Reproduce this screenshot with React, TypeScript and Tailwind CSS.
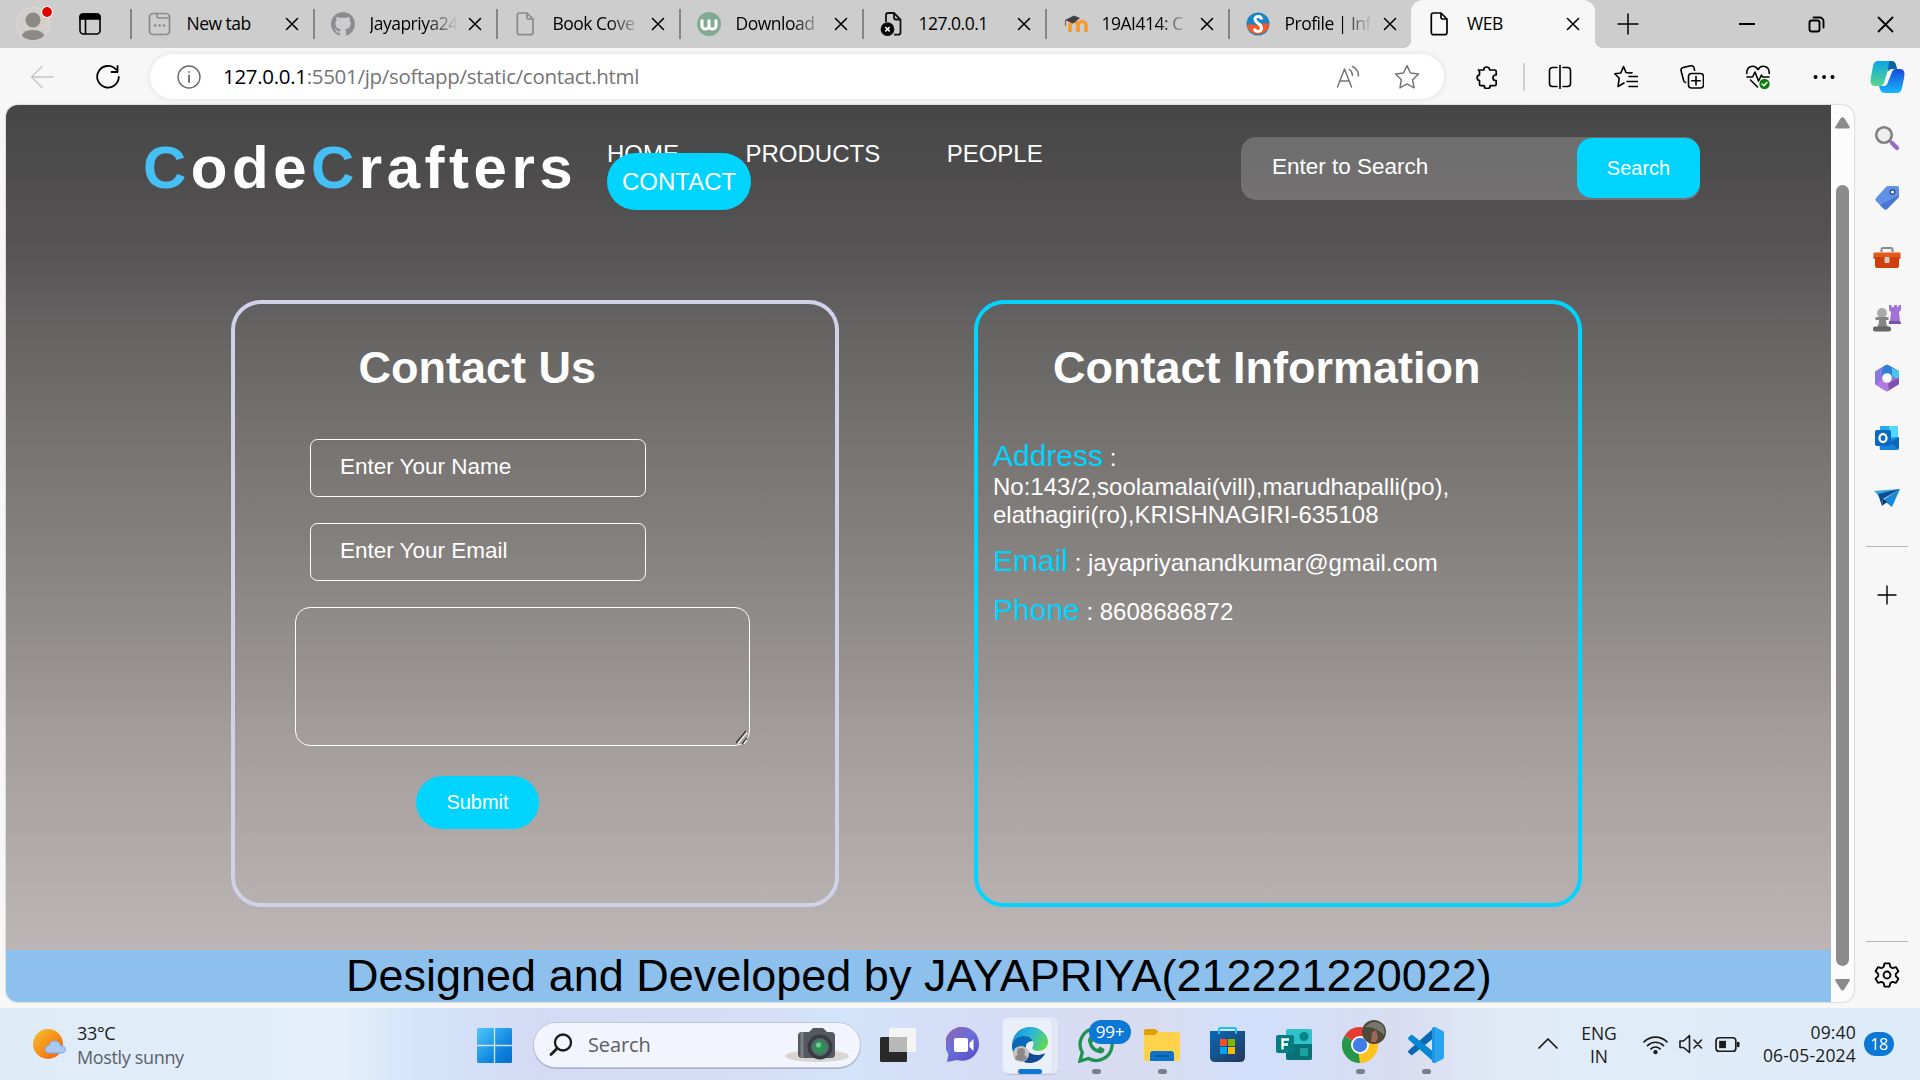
import React from 'react';
import type { ReactNode } from 'react';

const stroke = { fill: 'none', stroke: 'currentColor', strokeLinecap: 'round' as const, strokeLinejoin: 'round' as const };

function Svg({ size = 24, box = 24, w = 1.5, className = '', children }: { size?: number; box?: number; w?: number; className?: string; children: ReactNode }) {
  return (
    <svg width={size} height={size} viewBox={`0 0 ${box} ${box}`} {...stroke} strokeWidth={w} className={`block shrink-0 ${className}`}>
      {children}
    </svg>
  );
}

const Close = () => (
  <Svg size={14} box={14} w={1.6}><path d="M1.5 1.5l11 11M12.5 1.5l-11 11" /></Svg>
);
const PageIcon = ({ color }: { color: string }) => (
  <Svg className={color} w={1.7}><path d="M5.5 1h7.5l6 6v13.5a2.2 2.2 0 0 1-2.2 2.2H5.5a2.2 2.2 0 0 1-2.2-2.2V3.2A2.2 2.2 0 0 1 5.500 1zM13 1v4.500A1.500 1.500 0 0 0 14.500 7H19" /></Svg>
);
const NewTabIcon = () => (
  <Svg className="text-[#8a8a8a]" w={1.7}><rect x="1.500" y="1.500" width="20" height="21" rx="3.500" /><path d="M9 1.500v2.800A1.700 1.700 0 0 0 10.700 6H21.500" /><path d="M7.200 13.500h.1M11.600 13.500h.1M16 13.500h.1" strokeWidth={2.6} /></Svg>
);
const GithubIcon = () => (
  <svg width="24" height="24" viewBox="0 0 16 16" fill="#8b8d91" className="block"><path d="M8 0C3.58 0 0 3.58 0 8c0 3.54 2.29 6.53 5.47 7.59.4.07.55-.17.55-.38 0-.19-.01-.82-.01-1.49-2.01.37-2.53-.49-2.69-.94-.09-.23-.48-.94-.82-1.13-.28-.15-.68-.52-.01-.53.63-.01 1.08.58 1.23.82.72 1.21 1.87.87 2.33.66.07-.52.28-.87.51-1.07-1.78-.2-3.64-.89-3.64-3.95 0-.87.31-1.59.82-2.15-.08-.2-.36-1.02.08-2.12 0 0 .67-.21 2.2.82.64-.18 1.32-.27 2-.27s1.36.09 2 .27c1.53-1.04 2.2-.82 2.2-.82.44 1.1.16 1.92.08 2.12.51.56.82 1.27.82 2.15 0 3.07-1.87 3.75-3.65 3.95.29.25.54.73.54 1.48 0 1.07-.01 1.93-.01 2.2 0 .21.15.46.55.38A8.01 8.01 0 0 0 16 8c0-4.42-3.58-8-8-8z" /></svg>
);
const WIcon = () => (
  <svg width="24" height="24" viewBox="0 0 24 24" className="block"><circle cx="12" cy="12" r="12" fill="#82aa92" /><path d="M5 7.500v6.500a3.500 3 0 0 0 7 0V7.500v6.500a3.500 3 0 0 0 7 0V7.500" fill="none" stroke="#fff" strokeWidth="3" /></svg>
);
const ErrorPageIcon = () => (
  <svg width="24" height="24" viewBox="0 0 24 24" className="block" fill="none" stroke="#111" strokeWidth="1.8"><path d="M6 10V3.200A2.200 2.200 0 0 1 8.200 1H14l6.500 6.500v13a2.200 2.200 0 0 1-2.200 2.200H14M14 1v4.500a2 2 0 0 0 2 2h4.500" /><circle cx="7.500" cy="17.200" r="6" fill="#000" /><path d="M5.300 15l4.400 4.400M9.700 15l-4.400 4.400" stroke="#fff" strokeWidth="1.500" /></svg>
);
const MoodleIcon = () => (
  <svg width="26" height="24" viewBox="0 0 26 24" className="block" fill="none"><path d="M7 20v-6.500a3.700 3.700 0 0 1 8 0V20M15 20v-6.500a3.900 3.900 0 0 1 8 0V20" stroke="#f7982d" strokeWidth="3.500" /><path d="M2 8l9-4.500 6 2.500-7 5.500z" fill="#3f4245" /><path d="M2.500 8v6" stroke="#8a6a45" strokeWidth="1.200" /></svg>
);
const SIcon = () => (
  <svg width="24" height="24" viewBox="0 0 24 24" className="block"><circle cx="12" cy="12" r="11.500" fill="#1a86c8" /><path d="M.7 13.500c5-3 8 1 12-1s6-1 10.700-1A11.500 11.500 0 0 1 .7 13.500z" fill="#f15a29" /><path d="M15.500 7.500c0-4-6.500-4-6.500-.5 0 4.500 6.500 4.500 6.500 9 0 4.500-7 4.500-7 .5" fill="none" stroke="#fff" strokeWidth="3" /></svg>
);

const tabs: { title: string; icon: ReactNode; fade: boolean }[] = [
  { title: 'New tab', icon: <NewTabIcon />, fade: false },
  { title: 'Jayapriya24', icon: <GithubIcon />, fade: true },
  { title: 'Book Cove', icon: <PageIcon color="text-[#8a8a8a]" />, fade: true },
  { title: 'Download', icon: <WIcon />, fade: true },
  { title: '127.0.0.1', icon: <ErrorPageIcon />, fade: false },
  { title: '19AI414: C', icon: <MoodleIcon />, fade: true },
  { title: 'Profile | Inf', icon: <SIcon />, fade: true },
];

function TabTitle({ title, fade }: { title: string; fade: boolean }) {
  return (
    <div className={`mb-[2px] ml-[15px] h-7 w-[86px] overflow-hidden text-[17.500px] leading-7 tracking-[-0.5px] whitespace-nowrap text-black ${fade ? '[mask-image:linear-gradient(to_right,#000_65%,transparent_102%)]' : ''}`}>
      {title}
    </div>
  );
}

function TabStrip() {
  return (
    <div className="flex h-12 bg-[#cdcdcd]">
      <div className="flex w-[130px] items-center">
        <svg width="44" height="48" viewBox="0 0 44 48" className="ml-3"><circle cx="21" cy="24" r="16.500" fill="#d3d0cc" stroke="#dedcd7" /><circle cx="21" cy="20" r="7.500" fill="#8d8985" /><path d="M9.500 35.500a12.500 9 0 0 1 23 0A16.500 16.500 0 0 1 9.500 35.500z" fill="#8d8985" /><circle cx="35" cy="12" r="5.500" fill="#e60000" stroke="#fff" strokeWidth="1.200" /></svg>
        <svg width="22" height="22" viewBox="0 0 22 22" className="ml-[23px]" fill="none" stroke="#000" strokeWidth="1.600"><rect x="1" y="1" width="20" height="20" rx="3.500" /><path d="M1 6V3.500A2.500 2.500 0 0 1 3.500 1h15A2.500 2.500 0 0 1 21 3.500V6z" fill="#000" /><path d="M6.500 6v15" /></svg>
      </div>
      {tabs.map((t) => (
        <div key={t.title} className="flex w-[183px] items-center">
          <div className="h-[30px] w-[1.500px] bg-[#858585]" />
          <div className="ml-4 w-6">{t.icon}</div>
          <TabTitle title={t.title} fade={t.fade} />
          <div className="ml-[12px]"><Close /></div>
        </div>
      ))}
      <div className="relative flex w-[184px] items-center rounded-t-[12px] bg-[#f7f7f7]">
        <div className="absolute -left-2 bottom-0 size-2 bg-[radial-gradient(circle_at_0_0,transparent_8px,#f7f7f7_8px)]" />
        <div className="absolute -right-2 bottom-0 size-2 bg-[radial-gradient(circle_at_100%_0,transparent_8px,#f7f7f7_8px)]" />
        <div className="ml-[17px] w-6"><PageIcon color="text-black" /></div>
        <TabTitle title="WEB" fade={false} />
        <div className="ml-[13px]"><Close /></div>
      </div>
      <div className="ml-[22px] flex w-[109px] items-center"><Svg size={22} box={22} w={1.500}><path d="M11 1v20M1 11h20" /></Svg></div>
      <div className="flex flex-1 items-center">
        <div className="flex w-[69px] items-center pl-[13px]"><div className="h-[1.500px] w-[16px] bg-black" /></div>
        <div className="flex w-[69px] items-center pl-[13px]"><Svg size={17} box={17} w={1.900}><rect x="1.500" y="4.500" width="10" height="11" rx="2" /><path d="M5.500 1.500h6a4 4 0 0 1 4 4v6" /></Svg></div>
        <Svg size={17} box={17} w={1.800} className="ml-[13px]"><path d="M1.500 1.500l14 14M15.500 1.500l-14 14" /></Svg>
      </div>
    </div>
  );
}

function ToolButton({ children }: { children: ReactNode }) {
  return <div className="flex w-[66px] shrink-0 items-center justify-center">{children}</div>;
}

function Toolbar() {
  return (
    <div className="flex h-[57px] items-center bg-[#f7f7f7] text-black">
      <div className="flex w-[150px] items-center">
        <Svg className="ml-[30px] text-[#c6c6c6]" w={1.400}><path d="M23 12H1.500M12 1.500L1.500 12 12 22.500" /></Svg>
        <Svg className="ml-[42px]" w={1.800}><path d="M20 4.500A10.800 10.800 0 1 0 22.800 12M21.500 1v6h-6" /></Svg>
      </div>
      <div className="flex h-[45px] w-[1294px] items-center rounded-full bg-white shadow-[0_0_6px_rgba(0,0,0,0.1)]">
        <Svg className="ml-[27px] text-[#6b6b6b]" w={1.400}><circle cx="12" cy="12" r="11" /><path d="M12 10.500V17M12 7v.1" strokeWidth={1.800} /></Svg>
        <div className="mb-[2px] ml-[22px] w-[1113px] text-[20.500px] leading-8 tracking-[-0.31px] whitespace-nowrap text-[#757575]"><span className="text-black">127.0.0.1</span>:5501/jp/softapp/static/contact.html</div>
        <Svg className="text-[#767676]" w={1.500}><path d="M1.500 22L8.500 4l7 18M4 16h9M13.500 4.500c2 1.500 3 3.500 3 6M16.500 1.500c4 2 6 5 6 9.500" /></Svg>
        <Svg size={26} className="ml-[34px] text-[#767676]" w={1.400}><path d="M12 1.500l3.200 6.800 7.400 1-5.400 5.200 1.300 7.500L12 18.400 5.500 22l1.300-7.500L1.400 9.300l7.400-1z" /></Svg>
      </div>
      <div className="flex w-[79px] items-center pl-[31px]">
        <Svg size={24} w={1.700}><path d="M3.500 5h5.200a3 3 0 1 1 6 0h5a1.500 1.500 0 0 1 1.500 1.500V10h-1a2.800 2.800 0 0 0 0 5.500h1v3.700a1.500 1.500 0 0 1-1.500 1.500h-4.500a3 3 0 0 1-6 0H6a1.500 1.500 0 0 1-1.500-1.500v-3.700a2.900 2.900 0 0 1 0-5.700V6.500z" /></Svg>
      </div>
      <div className="h-7 w-[1.500px] bg-[#cfcfcf]" />
      <div className="ml-[2px] flex">
        <ToolButton><Svg w={1.600}><path d="M12 0v24M9 2.500H4.500A3 3 0 0 0 1.500 5.500v13a3 3 0 0 0 3 3H9M15 2.500h4.500a3 3 0 0 1 3 3v13a3 3 0 0 1-3 3H15" /></Svg></ToolButton>
        <ToolButton><Svg w={1.600}><path d="M16 8l-4-.5L9.500 1.500 6.800 8 .8 8.800l4.400 4.500L4 21.500l6-3.500M15 11.500h8.500M13 16.500h10.500M15 21.500h8.500M15 8l3-.3" /></Svg></ToolButton>
        <ToolButton><Svg w={1.600}><rect x="8.500" y="8.500" width="15" height="14.500" rx="3" /><path d="M16 11.500v8.500M11.700 15.700h8.600M5.500 17.500A3 3 0 0 1 3.500 15L1 5.500A2.800 2.800 0 0 1 3 2.500l8-1.800a2.500 2.500 0 0 1 3 2l.6 2.500" /></Svg></ToolButton>
        <ToolButton><Svg w={1.600}><path d="M.8 8.500C.5 0 9-.5 12 4.500 15-.5 23.500 0 23.200 8.500M1 12h5.500l2.500-5 3.500 9 3-6 1 2H23M4.500 15l7 7" /><circle cx="18.500" cy="19" r="5.200" fill="#107c10" stroke="none" /><path d="M16.200 19l1.700 1.700 3-3.200" stroke="#fff" /></Svg></ToolButton>
        <ToolButton><Svg w={3.800}><path d="M3.500 12h.1M12 12h.1M20.500 12h.1" /></Svg></ToolButton>
      </div>
      <svg width="38" height="34" viewBox="0 0 38 34" className="ml-[12px] shrink-0">
        <defs>
          <linearGradient id="cpa" x1="0" y1="0" x2="0" y2="1"><stop offset="0" stopColor="#0aa5e8" /><stop offset="1" stopColor="#58d68d" /></linearGradient>
          <linearGradient id="cpb" x1="0" y1="0" x2="0" y2="1"><stop offset="0" stopColor="#1848d8" /><stop offset="1" stopColor="#18b8ff" /></linearGradient>
        </defs>
        <path d="M9 1h13q4 0 5 4l1 4h-6q-3 0-4 4l-3 10q-1 3-4 3H6q-6 0-4-9L4 6q1-5 5-5z" fill="url(#cpa)" />
        <path d="M20 1h2q4 0 5 4l1 4h-6l-3 2z" fill="#0d63a8" />
        <path d="M28 33H16q-4 0-5-4l-1-3h5q3 0 4-4l4-10q1-3 4-3h4q6 0 4 9l-2 10q-1 5-5 5z" fill="url(#cpb)" />
      </svg>
    </div>
  );
}

const navLinks = ['HOME', 'PRODUCTS', 'PEOPLE'];

function SiteHeader() {
  return (
    <header className="flex h-[195px] items-start">
      <div className="mt-[28px] ml-[137px] w-[464px] text-[60px] leading-[70px] font-bold tracking-[4.500px] whitespace-nowrap text-white">
        <span className="text-[#46bff5]">C</span>ode<span className="text-[#46bff5]">C</span>rafters
      </div>
      <nav className="mt-[35px] w-[634px] text-[24px] leading-7 text-white">
        <div className="flex gap-[66.500px]">{navLinks.map((l) => <span key={l}>{l}</span>)}</div>
        <div><span className="relative rounded-[30px] bg-[#00d4ff] p-[15px]">CONTACT</span></div>
      </nav>
      <div className="mt-[32px] flex h-[63px] w-[459px] items-start justify-between rounded-[15px] bg-white/20">
        <div className="mt-[14px] ml-[31px] text-[22.500px] leading-8 text-white">Enter to Search</div>
        <div className="mt-px flex h-[60px] w-[123px] items-center justify-center rounded-[15px] bg-[#00d4ff] text-[20px] text-white">Search</div>
      </div>
    </header>
  );
}

function ContactForm() {
  return (
    <section className="h-[607px] w-[608px] rounded-[30px] border-4 border-[#d0d2e9] text-[22.500px] text-white">
      <h2 className="mt-[37px] ml-[123.500px] text-[45px] leading-[54px] font-bold">Contact Us</h2>
      <div className="mt-[44px] ml-[75px] flex h-[58px] w-[336px] items-center rounded-[7.500px] border border-white pb-[2px] pl-[29px]">Enter Your Name</div>
      <div className="mt-[26px] ml-[75px] flex h-[58px] w-[336px] items-center rounded-[7.500px] border border-white pb-[2px] pl-[29px]">Enter Your Email</div>
      <div className="mt-[26px] ml-[60px] flex h-[139px] w-[455px] items-end justify-end rounded-[15px] border border-white">
        <svg width="15" height="15" viewBox="0 0 15 15" fill="none" strokeWidth="1.300"><path d="M2 13L12 1M8 14l5-6" stroke="#333" /><path d="M4 13.500L13 2.500M10 14l3-4" stroke="#eee" /></svg>
      </div>
      <div className="mt-[30px] ml-[181px] flex h-[53px] w-[123px] items-center justify-center rounded-full bg-[#00d4ff] pb-px text-[20px]">Submit</div>
    </section>
  );
}

function Label({ children }: { children: ReactNode }) {
  return <span className="text-[30px] text-[#00d4ff]">{children}</span>;
}

function ContactInfo() {
  return (
    <section className="h-[607px] w-[608px] rounded-[30px] border-4 border-[#00d4ff] pl-[15px] text-[24px] text-white">
      <h2 className="mt-[37px] ml-[60px] text-[45px] leading-[54px] font-bold">Contact Information</h2>
      <div className="mt-[44px] h-[34px] leading-[34px]"><Label>Address</Label> :</div>
      <div className="leading-7">No:143/2,soolamalai(vill),marudhapalli(po),<br />elathagiri(ro),KRISHNAGIRI-635108</div>
      <div className="mt-[15px] h-[34px] leading-[34px]"><Label>Email</Label> : jayapriyanandkumar@gmail.com</div>
      <div className="mt-[15px] h-[34px] leading-[34px]"><Label>Phone</Label> : 8608686872</div>
    </section>
  );
}

function WebPage() {
  return (
    <div className="flex h-[897px] w-[1848px] overflow-hidden rounded-[12px] bg-[#fcfcfc] shadow-[0_0_2px_rgba(0,0,0,0.35)]">
      <div className="flex w-[1825px] flex-col font-['Liberation_Sans',Arial,sans-serif]">
        <div className="h-[845px] bg-[linear-gradient(#464646_0%,#555253_16%,#625f61_24%,#656361_26%,#6f6e6b_35%,#767270_39%,#827e7c_50%,#918d8a_62%,#9a9592_69%,#a19b99_73%,#bdb6b6_100%)]">
          <SiteHeader />
          <div className="flex gap-[135px] pl-[225px]">
            <ContactForm />
            <ContactInfo />
          </div>
        </div>
        <footer className="h-[52px] bg-[#8dc0ec] pl-[340px] text-[45px] leading-[52px] whitespace-nowrap text-black">Designed and Developed by JAYAPRIYA(212221220022)</footer>
      </div>
      <div className="flex flex-1 flex-col items-center pt-[12px] pr-px">
        <svg width="15" height="12" viewBox="0 0 15 12" fill="#8b8b8b"><path d="M7.500 0q1 0 2 1.500l5 8q1 2-1 2H1.500q-2 0-1-2l5-8q1-1.500 2-1.500z" /></svg>
        <div className="mt-[56px] h-[781px] w-[13px] rounded-full bg-[#8b8b8b]" />
        <svg width="15" height="12" viewBox="0 0 15 12" fill="#8b8b8b" className="mt-[13px]"><path d="M7.500 11.500q-1 0-2-1.500l-5-8q-1-2 1-2h12q2 0 1 2l-5 8q-1 1.500-2 1.500z" /></svg>
      </div>
    </div>
  );
}

const sideIcons: ReactNode[] = [
  <svg key="s" width="26" height="26" viewBox="0 0 26 26" fill="none"><circle cx="10" cy="10" r="7.800" stroke="#808080" strokeWidth="2.600" fill="#eee" /><path d="M15.500 15.500l2 2" stroke="#777" strokeWidth="2.500" /><path d="M18 18l5 5" stroke="#9868ce" strokeWidth="4.200" strokeLinecap="round" /></svg>,
  <svg key="t" width="26" height="26" viewBox="0 0 26 26"><path d="M14 1h9q2 0 2 2v8q0 1-1 2L13 24q-1.500 1-3 0l-8-8q-1.500-1.500 0-3L12 2q1-1 2-1z" fill="#5f91e4" /><path d="M25 10v1q0 1-1 2L13 24q-1.500 1-3 0l-4-4z" fill="#4a76d2" /><circle cx="18.500" cy="7" r="2.300" fill="#fff" stroke="#2f4f96" strokeWidth="1.500" /></svg>,
  <svg key="b" width="28" height="24" viewBox="0 0 28 24"><path d="M8.500 6V3.500Q8.500 2 10 2h8q1.500 0 1.500 1.500V6" fill="none" stroke="#8a8a8a" strokeWidth="2" /><path d="M2 11h24v9q0 2-2 2H4q-2 0-2-2z" fill="#d13e0d" /><rect x=".5" y="6.500" width="27" height="6" rx="1" fill="#e4581b" /><path d="M.5 12h27" stroke="#aa3208" /><rect x="11.500" y="11" width="5" height="6" rx="1" fill="#ccc" /></svg>,
  <svg key="c" width="28" height="28" viewBox="0 0 28 28"><path d="M16 1h2.500v2H21V1h3v2h1.500V1H28v5l-2 2 1 9 1 3H16l1-3 1-9-2-2z" fill="#a272d6" /><path d="M16 17h11l1 3H16z" fill="#7950ab" /><circle cx="9" cy="9" r="5" fill="#aaa" /><path d="M2.500 13h13v3H13q0 5 2 7H4q2-2 2-7H2.500z" fill="#858585" /><rect y="22.500" width="18" height="5" rx="2" fill="#666" /></svg>,
  <svg key="m" width="26" height="28" viewBox="0 0 26 28"><path d="M12 1Q13 .5 14 1L24 6.500q1 .5 1 2v10q0 1.500-1 2L14 27q-1 .5-2 0L2 21q-1-.5-1-2V9q0-1.500 1-2z" fill="#7b74dc" /><path d="M10 2l2-1q1-.5 2 0l10 5.500q1 .5 1 2V16l-7-4-5-3-5 3-.5 8L2 18z" fill="#2f80d8" /><path d="M10 2L2 7q-1 .5-1 2v10q0 1 1 1.700L8 17V8q0-4 2-6z" fill="#8b78dd" /><path d="M18 4l6 2.500q1 .5 1 2V16l-7-4z" fill="#49c6f0" /><path d="M2 20.500l6-4.500 5 3 5-3 7-2v5q0 1-1 1.700L14 27q-1 .5-2 0z" fill="#b37ae0" /><path d="M25 14v5q0 1-1 1.700L15 26l-1-6 4-3z" fill="#8050ac" /><circle cx="13" cy="14" r="4.800" fill="#f7f7f7" /></svg>,
  <svg key="o" width="26" height="26" viewBox="0 0 26 26"><rect x="6" y="1" width="18" height="20" rx="1" fill="#28a8ea" /><path d="M15 1h8q1 0 1 1v10h-9z" fill="#50d9ff" /><path d="M5 14h12l8-2v11q0 2-2 2H6z" fill="#1683d8" /><path d="M25 12v12l-9-6z" fill="#1066b5" /><rect x="1" y="5" width="16" height="16" rx="2" fill="#0a69c3" /><ellipse cx="9" cy="13" rx="3.500" ry="4" fill="none" stroke="#fff" strokeWidth="2.300" /></svg>,
  <svg key="p" width="26" height="20" viewBox="0 0 26 20"><path d="M0 3L26 1 8 11z" fill="#2da7e8" /><path d="M26 1L18 19 9 12z" fill="#1689d8" /><path d="M4 6L26 1 9 11l-1 7z" fill="#0e4b91" /><path d="M8 18l5-4-4-3z" fill="#102f61" /></svg>,
];

function Sidebar() {
  return (
    <aside className="flex h-[903px] w-[65px] flex-col items-center">
      <div className="mt-[3px] flex flex-col">
        {sideIcons.map((icon, i) => <div key={i} className="flex h-[60px] items-center justify-center">{icon}</div>)}
      </div>
      <div className="mt-[18px] h-px w-[42px] bg-[#b5b5b5]" />
      <Svg size={20} box={20} w={1.400} className="mt-[38px]"><path d="M10 1v18M1 10h18" /></Svg>
      <div className="mt-[336px] h-px w-[42px] bg-[#b5b5b5]" />
      <Svg size={26} w={1.700} className="mt-[20px]"><circle cx="12" cy="12" r="3.200" /><path d="M9.700 1.300h4.600l.8 3.200 2 1.200 3.200-1 2.200 3.900-2.400 2.300v2.200l2.400 2.300-2.200 3.900-3.200-1-2 1.200-.8 3.200H9.700l-.8-3.200-2-1.200-3.200 1-2.200-3.900 2.400-2.300v-2.200L1.500 8.600l2.200-3.900 3.200 1 2-1.200z" /></Svg>
    </aside>
  );
}

function EdgeIcon() {
  return (
    <svg width="36" height="36" viewBox="0 0 36 36">
      <defs><linearGradient id="eg" x1="0" y1=".3" x2="1" y2=".7"><stop stopColor="#1794d9" /><stop offset=".45" stopColor="#2bb7da" /><stop offset="1" stopColor="#65da45" /></linearGradient></defs>
      <path d="M0 19c0-7 6-11 12-11 5 0 9 3 9 6-5 0-8 3-7 8 2 8 10 11 19 5-9 15-33 10-33-8z" fill="#0c69b8" />
      <path d="M13 18c0 8 11 13 20 8-5 10-17 12-21 8-4-4-3-12 1-16z" fill="#114a92" />
      <path d="M0 17C1 6 9 0 18 0c11 0 18 8 18 15 0 6-5 9-10 9-5 0-7-2-5-5 2-5-3-10-9-10C6 9 1 13 0 17z" fill="url(#eg)" />
      <circle cx="9" cy="27" r="8" fill="#c7c5c2" /><circle cx="9" cy="25" r="4" fill="#8b8987" /><path d="M3 32a6 5 0 0 1 12 0q-6 4-12 0z" fill="#8b8987" />
    </svg>
  );
}

const taskIcons: { key: string; icon: ReactNode; dot: boolean }[] = [
  { key: 'explorer', dot: true, icon: <svg width="36" height="36" viewBox="0 0 36 36"><path d="M0 4q0-2 2-2h9l4 3v6H0z" fill="#dfa000" /><path d="M14 5h20q2 0 2 2v25q0 2-2 2H2q-2 0-2-2V8h11z" fill="#ffd24c" /><path d="M6 34v-7q0-3 3-3h18q3 0 3 3v7z" fill="#0d72c8" /><path d="M11 29h14" stroke="#0a4f91" strokeWidth="1.500" /></svg> },
  { key: 'store', dot: false, icon: <svg width="36" height="36" viewBox="0 0 36 36"><defs><linearGradient id="sg" x1="0" y1="0" x2="1" y2="1"><stop stopColor="#0869b7" /><stop offset="1" stopColor="#253858" /></linearGradient></defs><path d="M0 4h35v26q0 5-5 5H5q-5 0-5-5z" fill="url(#sg)" /><path d="M9 7V2q0-1 1-1h15q1 0 1 1v5" fill="none" stroke="#20c4f4" strokeWidth="2" /><path d="M10 12h7v7h-7z" fill="#f25022" /><path d="M18 12h7v7h-7z" fill="#7fba00" /><path d="M10 20h7v7h-7z" fill="#00a4ef" /><path d="M18 20h7v7h-7z" fill="#ffb900" /></svg> },
  { key: 'forms', dot: false, icon: <svg width="36" height="36" viewBox="0 0 36 36"><rect x="10" y="2" width="26" height="31" rx="2" fill="#30c2c9" /><path d="M10 17h26v14q0 2-2 2H12q-2 0-2-2z" fill="#087276" /><circle cx="28" cy="9.500" r="4.500" fill="#06858b" /><rect x="24" y="21" width="8" height="8" fill="#1ba0a4" /><rect y="8" width="18" height="18" rx="2" fill="#047e82" /><path d="M6.500 22.500V12.500H13M6.500 17.500h5.500" fill="none" stroke="#fff" strokeWidth="2.300" /></svg> },
  { key: 'chrome', dot: true, icon: <svg width="44" height="44" viewBox="0 0 44 44" className="-mt-2 -mr-2 shrink-0"><path d="M18 26L2.400 17A18 18 0 0 1 33.600 17z" fill="#e63b32" /><path d="M18 26l15.600-9A18 18 0 0 1 18 44z" fill="#fcc31e" /><path d="M18 26v18A18 18 0 0 1 2.400 17z" fill="#26964a" /><path d="M18 17h15.600L26 31l-8 13 -2-13z" fill="#fcc31e" /><circle cx="18" cy="26" r="9" fill="#fff" /><circle cx="18" cy="26" r="7.200" fill="#3f7ee8" /><circle cx="32" cy="13" r="12" fill="#4d493b" /><path d="M23 8q8-8 16-3 5 5 3 11-9-9-19-8z" fill="#77786b" /><path d="M30 14l4-3 2 7-2 5h-5z" fill="#a2655a" /></svg> },
  { key: 'code', dot: true, icon: <svg width="36" height="36" viewBox="0 0 36 36"><path d="M27 0L1 23q-2 2 0 3l2 2q1 .5 2-.500L27 10z" fill="#0b68b3" /><path d="M27 36L1 13q-2-2 0-3l2-2q1-.5 2 .5L27 26z" fill="#0787d2" /><path d="M27 0l8 4q1 .5 1 2v24q0 1.500-1 2l-8 4z" fill="#28a5ee" /><path d="M27 0v36q-2 0-3-1V1q1-1 3-1z" fill="#1f96e3" /></svg> },
];

function TaskSlot({ children, dot }: { children: ReactNode; dot: boolean }) {
  return (
    <div className="relative flex h-[72px] w-[66px] shrink-0 items-center justify-center pt-px">
      <div className="flex size-9 items-center justify-center">{children}</div>
      {dot && <div className="absolute bottom-[6px] left-[28.500px] h-[5px] w-[9px] rounded-full bg-[#7a7e88]" />}
    </div>
  );
}

function Taskbar() {
  return (
    <footer className="flex h-[72px] items-center bg-[linear-gradient(90deg,#deecf8_0%,#e3eef8_18%,#d3e4fb_22%,#d5daf4_28%,#d5def6_40%,#d3e4fa_43%,#d5dcf5_52%,#d8dcf0_60%,#d1dffb_65%,#d8dcf0_73%,#dfe7f5_77%,#e0ecf8_82%,#deebf8_100%)] text-[#1b1b1b]">
      <svg width="34" height="32" viewBox="0 0 34 32" className="mt-[2px] ml-[33px]"><defs><linearGradient id="sun" x1="0" y1="0" x2="1" y2="1"><stop stopColor="#f7c32e" /><stop offset="1" stopColor="#f45c0a" /></linearGradient></defs><circle cx="15" cy="15" r="15" fill="url(#sun)" /><path d="M16 24q-4 0-4-3.500t4-4q1-4.500 5.500-4.500t6 4.500q5 .5 5 4T28 24z" fill="#a9c8f6" stroke="#7ea7ea" /></svg>
      <div className="mt-[2px] ml-[10px] w-[400px] text-[18px] leading-6 tracking-[-0.35px]">
        <div>33°C</div><div className="text-[#5a5f66]">Mostly sunny</div>
      </div>
      <svg width="35" height="35" viewBox="0 0 35 35" className="mt-[2px]"><defs><linearGradient id="win" x1="0" y1="0" x2="1" y2="1"><stop stopColor="#4cc9fb" /><stop offset=".7" stopColor="#0b7fdb" /><stop offset="1" stopColor="#0471ce" /></linearGradient></defs><path d="M1 0h15.800v16.800H0V1zM18.200 0H34l1 1v15.800H18.200zM0 18.200h16.800V35H1l-1-1zM18.200 18.200H35V34l-1 1H18.200z" fill="url(#win)" /></svg>
      <div className="mt-[2px] ml-[21px] flex h-[46px] w-[328px] items-center rounded-full border border-[#bfc7df] bg-[#f2f5fd] shadow-[0_1px_0_#a9b0c8]">
        <Svg className="ml-[15px]" w={2.300}><circle cx="14" cy="9.500" r="8" /><path d="M8 15.500L2 21.500" strokeWidth={2.800} /></Svg>
        <div className="ml-[15px] w-[196px] text-[20px] leading-7 tracking-[-0.1px] text-[#5c5e64]">Search</div>
        <svg width="66" height="36" viewBox="0 0 66 36"><ellipse cx="33" cy="29" rx="32" ry="6" fill="#d9d5d3" /><path d="M24 6l5-5h10l5 5z" fill="#53585e" /><rect x="14" y="5" width="37" height="26" rx="4" fill="#555a61" /><path d="M18 5v26" stroke="#7b8087" strokeWidth="3" /><circle cx="36" cy="20" r="12.500" fill="#363c42" /><circle cx="36" cy="20" r="9" fill="#5b656c" /><circle cx="36" cy="20" r="6.500" fill="#2b9158" /><circle cx="34.500" cy="18" r="2.500" fill="#77c995" /></svg>
      </div>
      <div className="ml-[4px] flex">
        <TaskSlot dot={false}><svg width="36" height="36" viewBox="0 0 36 36"><rect y="10" width="27" height="25" rx="1.500" fill="#292929" /><rect x="9" y="1" width="27" height="24" rx="1.500" fill="#f4f4f4" /><path d="M9 10h18v15H9z" fill="#b8b8b8" /></svg></TaskSlot>
        <TaskSlot dot={false}><svg width="36" height="36" viewBox="0 0 36 36"><defs><linearGradient id="ch" x1="0" y1="0" x2=".7" y2="1"><stop stopColor="#9163a9" /><stop offset=".5" stopColor="#6c70d8" /><stop offset="1" stopColor="#5751c8" /></linearGradient></defs><path d="M1 35l1.500-8A17 17 0 1 1 11 33z" fill="url(#ch)" /><rect x="8" y="11" width="14" height="14" rx="2" fill="#fff" /><path d="M23.500 16l4-4v12l-4-4z" fill="#fff" /></svg></TaskSlot>
        <div className="relative flex h-[72px] w-[66px] items-center">
          <div className="absolute top-[9px] left-[7px] h-[57px] w-[54px] rounded-[6px] bg-[#e3e8f5] shadow-[0_1px_1px_#b9bfd2]" />
          <div className="relative mt-[2px] ml-[5px] flex h-[57px] w-[51px] items-center justify-center rounded-[6px] border border-[#dce1ee] bg-[#ebeffa]"><div className="ml-1"><EdgeIcon /></div></div>
          <div className="absolute bottom-[6px] left-[21px] h-[5px] w-6 rounded-full bg-[#0a78d4]" />
        </div>
        <div className="relative">
          <TaskSlot dot><Svg size={36} box={36} w={3.300} className="text-[#209150]"><path d="M2 34l2.300-8.500A16 16 0 1 1 10.500 31.500z" strokeLinejoin="miter" /><path d="M11 10q2-2 3.500 1l1 3-1.500 2.500q2 4 5.500 5.500l2.500-2.500 4.500 2.500q0 4-4 4.500Q12 25 10 14q0-2 1-4z" fill="currentColor" stroke="none" /></Svg></TaskSlot>
          <div className="absolute top-[12px] left-[26px] flex h-6 w-[42px] items-center justify-center rounded-full bg-[#0a78d4] text-[17px] leading-6 tracking-[-0.2px] text-white">99+</div>
        </div>
        {taskIcons.map((t) => <TaskSlot key={t.key} dot={t.dot}>{t.icon}</TaskSlot>)}
      </div>
      <Svg size={20} box={20} w={1.700} className="ml-[79px]"><path d="M1 14l9-9 9 9" /></Svg>
      <div className="mt-px ml-[5px] w-[72px] text-center text-[17.500px] leading-[23px]"><div>ENG</div><div>IN</div></div>
      <Svg size={25} className="ml-[8px]" w={1.600}><path d="M1 9.500a15.500 15.500 0 0 1 22 0M4.300 13a11 11 0 0 1 15.400 0M7.600 16.200a6.300 6.300 0 0 1 8.800 0" /><circle cx="12" cy="19.300" r="1.300" fill="currentColor" /></Svg>
      <Svg size={24} className="ml-[11px]" w={1.600}><path d="M1 9v6.500h3.500l6 5V3.500L4.500 9zM15 8l7.500 8M22.500 8L15 16" /></Svg>
      <Svg size={25} className="ml-[12px]" w={1.600}><rect x="1" y="5.500" width="19" height="13" rx="3" /><rect x="4" y="8.500" width="6.500" height="7" fill="currentColor" stroke="none" /><path d="M22.300 10.500v3" strokeWidth={2.500} /></Svg>
      <div className="ml-[15px] w-[101px] text-right text-[17.500px] leading-[23px] tracking-[0.18px] whitespace-nowrap"><div>09:40</div><div>06-05-2024</div></div>
      <div className="ml-[8px] flex h-6 w-[30px] items-center justify-center rounded-full bg-[#0a78d4] text-[16px] leading-6 tracking-[-0.3px] text-white">18</div>
    </footer>
  );
}

export default function App() {
  return (
    <div className="h-[1080px] w-[1920px] overflow-hidden bg-[#f7f7f7] font-['Open_Sans','Noto_Sans',sans-serif]">
      <TabStrip />
      <Toolbar />
      <div className="flex h-[903px] pl-[6px]">
        <WebPage />
        <Sidebar />
      </div>
      <Taskbar />
    </div>
  );
}
